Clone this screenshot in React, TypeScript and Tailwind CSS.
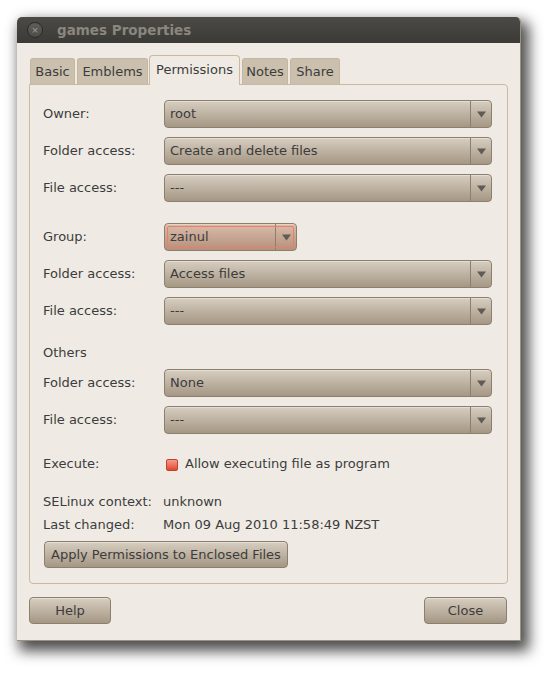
import clsx from 'clsx'

const font = "font-['DejaVu_Sans','Liberation_Sans',sans-serif]"

// ===== 下拉框 =====
function Combo({ value, focused, className }: { value: string; focused?: boolean; className?: string }) {
  return (
    <div
      className={clsx(
        'relative flex h-[28px] rounded-[4px] border border-[#8b7f6d] bg-linear-to-b shadow-[inset_0_1px_0_rgba(255,255,255,0.35)]',
        focused ? 'from-[#dbbcaa] to-[#b3917d]' : 'from-[#d7cec1] to-[#a59784]',
        className
      )}
    >
      {focused && (
        <div className="pointer-events-none absolute inset-[2px] rounded-[2px] border border-[#ec7e68]" />
      )}
      <div className="flex flex-1 items-center pl-[5px] text-[13px] text-[#3c3c3c]">{value}</div>
      <div className="flex w-[21px] items-center justify-center border-l border-[#8b7f6d]">
        <svg width="9" height="7" viewBox="0 0 9 7">
          <polygon points="0,0.5 9,0.5 4.5,6.5" fill="#5f5b55" />
        </svg>
      </div>
    </div>
  )
}

function Row({ label, children, className }: { label: string; children: React.ReactNode; className?: string }) {
  return (
    <div className={clsx('flex items-center', className)}>
      <div className="w-[121px] shrink-0 text-[13px] text-[#3c3c3c]">{label}</div>
      {children}
    </div>
  )
}

function Button({ children, className }: { children: React.ReactNode; className?: string }) {
  return (
    <div
      className={clsx(
        'flex h-[27px] items-center rounded-[4px] border border-[#8b7f6d] bg-linear-to-b from-[#d7cec1] to-[#a59784] text-[13px] text-[#3c3c3c] shadow-[inset_0_1px_0_rgba(255,255,255,0.35)]',
        className
      )}
    >
      {children}
    </div>
  )
}

const tabs = [
  { name: 'Basic', cls: 'w-[45px] ml-[1px]' },
  { name: 'Emblems', cls: 'w-[71px] ml-[2px]' },
  { name: 'Permissions', cls: 'w-[91px] ml-[1px]' },
  { name: 'Notes', cls: 'w-[46px] ml-[2px]' },
  { name: 'Share', cls: 'w-[50px] ml-[2px]' },
]

export default function App() {
  return (
    <div className={clsx('h-[675px] w-[555px] bg-white pl-[17px] pt-[17px]', font)}>
      {/* 窗口 */}
      <div className="flex h-[624px] w-[504px] flex-col overflow-hidden rounded-t-[5px] border-r border-b border-[#9c917f] bg-[#efebe4] shadow-[5px_7px_14px_3px_rgba(0,0,0,0.7)]">
        {/* 标题栏 */}
        <div className="flex h-[26px] shrink-0 items-center bg-linear-to-b from-[#4b4a45] to-[#3b3a36] pl-[10px]">
          <div className="flex h-[16px] w-[16px] items-center justify-center rounded-full border border-[#2b2a27] bg-linear-to-b from-[#5e5d58] to-[#4d4c47]">
            <span className="text-[9px] leading-none text-[#a09e98]">×</span>
          </div>
          <div className="ml-[14px] text-[13.5px] font-bold text-[#8a877f]">games Properties</div>
        </div>

        <div className="flex flex-1 flex-col pt-[12px] pr-[12px] pl-[12px]">
          {/* 标签页 */}
          <div className="flex h-[29px] items-end">
            {tabs.map((t) =>
              t.name === 'Permissions' ? (
                <div
                  key={t.name}
                  className={clsx(
                    'relative z-10 -mb-px flex h-[30px] items-center justify-center whitespace-nowrap rounded-t-[4px] border border-b-0 border-[#c9b99f] bg-[#efebe4] pb-[2px] text-[13px] text-[#3c3c3c]',
                    t.cls
                  )}
                >
                  {t.name}
                </div>
              ) : (
                <div
                  key={t.name}
                  className={clsx(
                    'flex h-[26px] items-center justify-center whitespace-nowrap rounded-t-[3px] border border-b-0 border-[#c4b79f] bg-[#cac0ad] text-[13px] text-[#3c3c3c]',
                    t.cls
                  )}
                >
                  {t.name}
                </div>
              )
            )}
          </div>

          {/* 面板 */}
          <div className="flex h-[500px] flex-col rounded-b-[4px] rounded-tr-[4px] border border-[#c9b99f] pt-[15px] pr-[15px] pl-[13px]">
            <Row label="Owner:">
              <Combo value="root" className="flex-1" />
            </Row>
            <Row label="Folder access:" className="mt-[9px]">
              <Combo value="Create and delete files" className="flex-1" />
            </Row>
            <Row label="File access:" className="mt-[9px]">
              <Combo value="---" className="flex-1" />
            </Row>

            <Row label="Group:" className="mt-[21px]">
              <Combo value="zainul" focused className="w-[133px]" />
            </Row>
            <Row label="Folder access:" className="mt-[9px]">
              <Combo value="Access files" className="flex-1" />
            </Row>
            <Row label="File access:" className="mt-[9px]">
              <Combo value="---" className="flex-1" />
            </Row>

            <div className="mt-[19px] h-[18px] text-[13px] leading-[18px] text-[#3c3c3c]">Others</div>
            <Row label="Folder access:" className="mt-[7px]">
              <Combo value="None" className="flex-1" />
            </Row>
            <Row label="File access:" className="mt-[9px]">
              <Combo value="---" className="flex-1" />
            </Row>

            <Row label="Execute:" className="mt-[21px] h-[18px]">
              <div className="ml-[2px] flex items-center text-[13px] text-[#3c3c3c]">
                <div className="mt-[1px] h-[12px] w-[12px] rounded-[2px] border border-[#c2412f] bg-linear-to-b from-[#f59a88] to-[#e0452f]" />
                <span className="ml-[7px]">Allow executing file as program</span>
              </div>
            </Row>

            <Row label="SELinux context:" className="mt-[20px] h-[18px]">
              <span className="-ml-[1px] text-[13px] text-[#3c3c3c]">unknown</span>
            </Row>
            <Row label="Last changed:" className="mt-[5px] h-[18px]">
              <span className="-ml-[1px] text-[13px] text-[#3c3c3c]">Mon 09 Aug 2010 11:58:49 NZST</span>
            </Row>

            <div className="mt-[7px] flex pl-[1px]">
              <Button className="px-[6px]">Apply Permissions to Enclosed Files</Button>
            </div>
          </div>

          {/* 底部按钮 */}
          <div className="mt-[13px] flex justify-between">
            <Button className="w-[82px] justify-center">Help</Button>
            <Button className="mr-[1px] w-[83px] justify-center">Close</Button>
          </div>
        </div>
      </div>
    </div>
  )
}
